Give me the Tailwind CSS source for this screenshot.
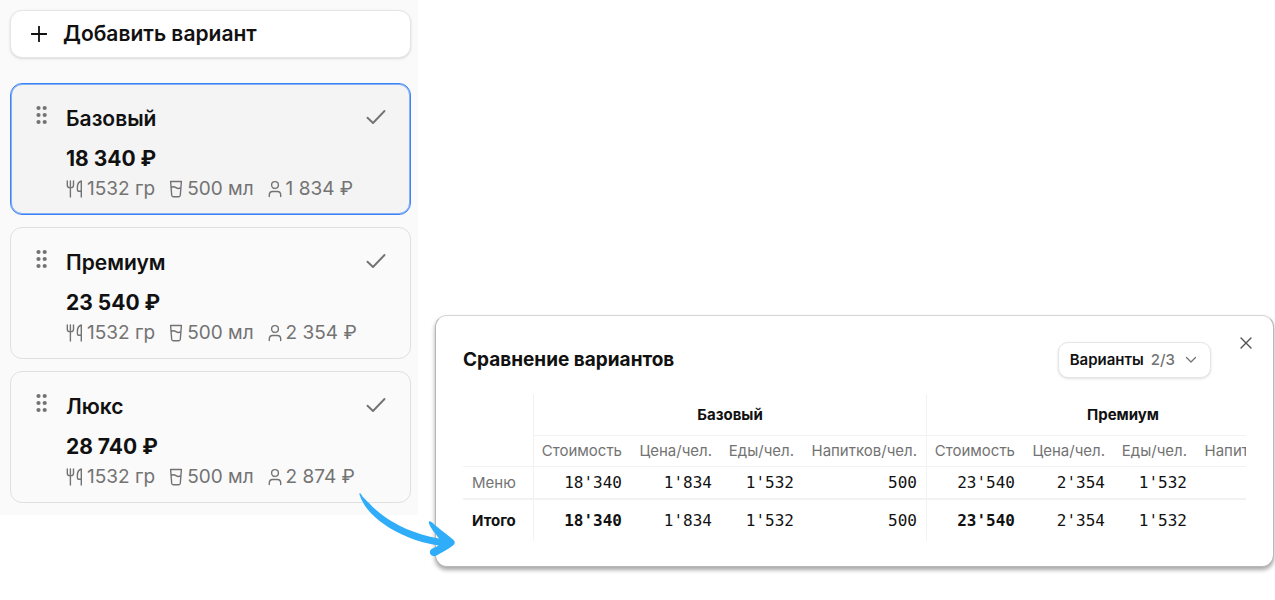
<!DOCTYPE html>
<html lang="ru">
<head>
<meta charset="utf-8">
<meta name="viewport" content="width=device-width, initial-scale=1">
<title>Сравнение вариантов</title>
<script src="https://cdn.jsdelivr.net/npm/@tailwindcss/browser@4"></script>
</head>
<body class="bg-white font-['Inter','Noto_Sans',sans-serif] text-[#111111]">
<svg class="hidden" aria-hidden="true">
  <symbol id="grip" viewBox="0 0 12 20"><g fill="currentColor"><circle cx="2.5" cy="3" r="2.1"/><circle cx="8.7" cy="3" r="2.1"/><circle cx="2.5" cy="10" r="2.1"/><circle cx="8.7" cy="10" r="2.1"/><circle cx="2.5" cy="17" r="2.1"/><circle cx="8.7" cy="17" r="2.1"/></g></symbol>
  <symbol id="check" viewBox="0 0 20 16"><path d="M1.5 8.7 7 14 18.5 2" fill="none" stroke="currentColor" stroke-width="1.9" stroke-linecap="round" stroke-linejoin="round"/></symbol>
  <symbol id="cutlery" viewBox="0 0 17 18"><path d="M1.3 1v4.2c0 1.6 1 2.4 2.2 2.4h1.8c1.3 0 2.2-.8 2.2-2.4V1M4.4 1v16M15.3 17V1c-2.6.7-3.9 3.2-3.9 6.4v2.3c0 1 .5 1.5 1.3 1.5h2.6" fill="none" stroke="currentColor" stroke-width="1.4" stroke-linecap="round" stroke-linejoin="round"/></symbol>
  <symbol id="cup" viewBox="0 0 14 18"><path d="M1.6 1.5h10.800l-1.100 13.700c-.1 1-.6 1.500-1.500 1.500H4.200c-.9 0-1.400-.5-1.500-1.500zM2.100 7.600c1.700-1.300 3.200-1.200 4.900 0s3.200 1.200 4.900 0" fill="none" stroke="currentColor" stroke-width="1.400" stroke-linecap="round" stroke-linejoin="round"/></symbol>
  <symbol id="person" viewBox="0 0 14 18"><g fill="none" stroke="currentColor" stroke-width="1.400" stroke-linecap="round"><circle cx="7" cy="5" r="3.400"/><path d="M1.300 16.500v-1.400c0-2.100 1.300-3.600 3.400-3.600h4.600c2.100 0 3.400 1.500 3.400 3.600v1.400"/></g></symbol>
</svg>
<main class="relative flex min-h-screen items-start">
  <aside class="flex w-[418px] shrink-0 flex-col bg-[#fafafa] pt-2.5 pr-[7px] pb-3 pl-2.5">
    <button type="button" class="flex h-12 items-center gap-4 rounded-xl border border-[#e5e5e5] bg-white px-5 text-left text-[21px] font-semibold shadow-sm">
      <svg class="size-4 shrink-0" viewBox="0 0 16 16" aria-hidden="true"><path d="M8 .5v15M.5 8h15" stroke="currentColor" stroke-width="1.800" stroke-linecap="round"/></svg>
      Добавить вариант
    </button>
    <div class="mt-[25px] flex flex-col gap-3">
      <article class="flex gap-[18px] rounded-xl border border-[#3b82f6] bg-[#f4f4f4] px-[25px] pt-[21px] pb-[11px] ring-1 ring-[#3b82f6]/60 ring-inset">
        <button type="button" aria-label="Переместить Базовый" class="h-5 w-3 text-[#737373]"><svg class="h-5 w-3"><use href="#grip"/></svg></button>
        <div class="min-w-0 flex-1">
          <h3 class="text-[21px] leading-7 font-semibold">Базовый</h3>
          <p class="mt-3 text-[21px] leading-7 font-bold">18 340 ₽</p>
          <ul class="mt-0.5 flex gap-3.5 text-[19px] leading-7 whitespace-nowrap text-[#737373]">
            <li class="flex items-center gap-1"><svg class="h-[18px] w-[17px]"><use href="#cutlery"/></svg>1532 гр</li>
            <li class="flex items-center gap-1"><svg class="h-[18px] w-3.5"><use href="#cup"/></svg>500 мл</li>
            <li class="flex items-center gap-1"><svg class="h-[18px] w-3.5"><use href="#person"/></svg>1 834 ₽</li>
          </ul>
        </div>
        <button type="button" aria-label="Выбрать Базовый" class="-mr-px mt-1 h-4 w-5 text-[#737373]"><svg class="h-4 w-5"><use href="#check"/></svg></button>
      </article>
      <article class="flex gap-[18px] rounded-xl border border-[#e0e0e0] px-[25px] pt-[21px] pb-[11px]">
        <button type="button" aria-label="Переместить Премиум" class="h-5 w-3 text-[#737373]"><svg class="h-5 w-3"><use href="#grip"/></svg></button>
        <div class="min-w-0 flex-1">
          <h3 class="text-[21px] leading-7 font-semibold">Премиум</h3>
          <p class="mt-3 text-[21px] leading-7 font-bold">23 540 ₽</p>
          <ul class="mt-0.5 flex gap-3.5 text-[19px] leading-7 whitespace-nowrap text-[#737373]">
            <li class="flex items-center gap-1"><svg class="h-[18px] w-[17px]"><use href="#cutlery"/></svg>1532 гр</li>
            <li class="flex items-center gap-1"><svg class="h-[18px] w-3.5"><use href="#cup"/></svg>500 мл</li>
            <li class="flex items-center gap-1"><svg class="h-[18px] w-3.5"><use href="#person"/></svg>2 354 ₽</li>
          </ul>
        </div>
        <button type="button" aria-label="Выбрать Премиум" class="-mr-px mt-1 h-4 w-5 text-[#737373]"><svg class="h-4 w-5"><use href="#check"/></svg></button>
      </article>
      <article class="flex gap-[18px] rounded-xl border border-[#e0e0e0] px-[25px] pt-[21px] pb-[11px]">
        <button type="button" aria-label="Переместить Люкс" class="h-5 w-3 text-[#737373]"><svg class="h-5 w-3"><use href="#grip"/></svg></button>
        <div class="min-w-0 flex-1">
          <h3 class="text-[21px] leading-7 font-semibold">Люкс</h3>
          <p class="mt-3 text-[21px] leading-7 font-bold">28 740 ₽</p>
          <ul class="mt-0.5 flex gap-3.5 text-[19px] leading-7 whitespace-nowrap text-[#737373]">
            <li class="flex items-center gap-1"><svg class="h-[18px] w-[17px]"><use href="#cutlery"/></svg>1532 гр</li>
            <li class="flex items-center gap-1"><svg class="h-[18px] w-3.5"><use href="#cup"/></svg>500 мл</li>
            <li class="flex items-center gap-1"><svg class="h-[18px] w-3.5"><use href="#person"/></svg>2 874 ₽</li>
          </ul>
        </div>
        <button type="button" aria-label="Выбрать Люкс" class="-mr-px mt-1 h-4 w-5 text-[#737373]"><svg class="h-4 w-5"><use href="#check"/></svg></button>
      </article>
    </div>
  </aside>

  <section aria-labelledby="compare" class="mt-[315px] mr-px ml-[17px] min-w-0 flex-1 rounded-xl border border-[#b8b8b8] border-t-[#d4d4d4] bg-white pt-5 pr-5 pb-[25px] pl-[27px] shadow-[0_3px_4px_rgba(0,0,0,0.35)]">
    <header class="flex items-start">
      <h2 id="compare" class="mt-2.5 flex-1 text-[19px] leading-7 font-bold">Сравнение вариантов</h2>
      <button type="button" class="mt-1.5 flex h-9 items-center rounded-[10px] border border-[#e5e5e5] bg-white px-[11px] text-[15px] font-semibold shadow-sm">
        Варианты <span class="ml-[7px] font-medium text-[#737373]">2/3</span>
        <svg class="mr-0.5 ml-2.5 h-2 w-3 text-[#737373]" viewBox="0 0 12 8" aria-hidden="true"><path d="m1.500 1.500 4.500 4.500 4.500-4.500" fill="none" stroke="currentColor" stroke-width="1.300" stroke-linecap="round" stroke-linejoin="round"/></svg>
      </button>
      <button type="button" aria-label="Закрыть" class="ml-7 flex size-3.5 items-center justify-center text-[#525252]"><svg class="size-3" viewBox="0 0 12 12"><path d="m1 1 10 10M11 1 1 11" stroke="currentColor" stroke-width="1.400" stroke-linecap="round"/></svg></button>
    </header>
    <div class="mt-4 mr-[7px] overflow-x-auto [scrollbar-width:none]">
      <table class="w-[856px] table-fixed border-separate border-spacing-0 text-right text-[15px] leading-5">
        <colgroup><col class="w-[70px]"><col class="w-[98px]"><col class="w-[90px]"><col class="w-[82px]"><col class="w-[123px]"><col class="w-[98px]"><col class="w-[90px]"><col class="w-[82px]"><col class="w-[123px]"></colgroup>
        <thead>
          <tr class="h-[42px] text-center">
            <td></td>
            <th colspan="4" scope="colgroup" class="border-b border-l border-[#f2f2f2] font-bold">Базовый</th>
            <th colspan="4" scope="colgroup" class="border-b border-l border-[#f2f2f2] font-bold">Премиум</th>
          </tr>
          <tr class="h-[31px] whitespace-nowrap text-[#737373]">
            <td class="border-b border-[#f2f2f2]"></td>
            <th scope="col" class="border-b border-l border-[#f2f2f2] pr-[9px] font-normal">Стоимость</th>
            <th scope="col" class="border-b border-[#f2f2f2] pr-[9px] font-normal">Цена/чел.</th>
            <th scope="col" class="border-b border-[#f2f2f2] pr-[9px] font-normal">Еды/чел.</th>
            <th scope="col" class="border-b border-[#f2f2f2] pr-[9px] font-normal">Напитков/чел.</th>
            <th scope="col" class="border-b border-l border-[#f2f2f2] pr-[9px] font-normal">Стоимость</th>
            <th scope="col" class="border-b border-[#f2f2f2] pr-[9px] font-normal">Цена/чел.</th>
            <th scope="col" class="border-b border-[#f2f2f2] pr-[9px] font-normal">Еды/чел.</th>
            <th scope="col" class="border-b border-[#f2f2f2] pr-[9px] font-normal">Напитков/чел.</th>
          </tr>
        </thead>
        <tbody class="font-['DejaVu_Sans_Mono',monospace] text-base leading-5">
          <tr class="h-[33px]">
            <th scope="row" class="border-b-2 border-[#f2f2f2] pl-[9px] text-left font-['Inter',sans-serif] text-[15px] font-normal text-[#737373]">Меню</th>
            <td class="border-b-2 border-l border-b-[#f2f2f2] border-l-[#f2f2f2] pr-[9px]">18'340</td>
            <td class="border-b-2 border-[#f2f2f2] pr-[9px]">1'834</td>
            <td class="border-b-2 border-[#f2f2f2] pr-[9px]">1'532</td>
            <td class="border-b-2 border-[#f2f2f2] pr-[9px]">500</td>
            <td class="border-b-2 border-l border-b-[#f2f2f2] border-l-[#f2f2f2] pr-[9px]">23'540</td>
            <td class="border-b-2 border-[#f2f2f2] pr-[9px]">2'354</td>
            <td class="border-b-2 border-[#f2f2f2] pr-[9px]">1'532</td>
            <td class="border-b-2 border-[#f2f2f2] pr-[9px]">500</td>
          </tr>
          <tr class="h-[41px]">
            <th scope="row" class="pl-[9px] text-left font-['Inter',sans-serif] text-[15px] font-bold">Итого</th>
            <td class="border-l border-[#f2f2f2] pr-[9px] font-bold">18'340</td>
            <td class="pr-[9px]">1'834</td>
            <td class="pr-[9px]">1'532</td>
            <td class="pr-[9px]">500</td>
            <td class="border-l border-[#f2f2f2] pr-[9px] font-bold">23'540</td>
            <td class="pr-[9px]">2'354</td>
            <td class="pr-[9px]">1'532</td>
            <td class="pr-[9px]">500</td>
          </tr>
        </tbody>
      </table>
    </div>
  </section>

  <svg class="absolute top-[490px] left-[355px] h-[70px] w-[104px]" viewBox="0 0 104 70" fill="#30adf9" aria-hidden="true">
    <path d="M4.300 4C4.200 3 5.300 2.800 5.800 3.800C8 8 11.500 10.500 15 14C19 18.500 23 21.800 28 25.500C40 34.500 60 44.500 84 48.500C80 43 75.500 38 74 33.500C73.300 31 75 30.700 76.500 32C83 38 90 43 98 49.500C100.300 51.500 100.300 53.500 98 55.500C93 59.500 87 62 82 65.300C78 67.800 73.500 64.500 75.200 60.700C76.500 58 80 57.800 83.500 55.500C62 52 43 44.500 28 33.500C18.500 26.500 8.500 17.500 4.300 4Z"/>
  </svg>
</main>
</body>
</html>
